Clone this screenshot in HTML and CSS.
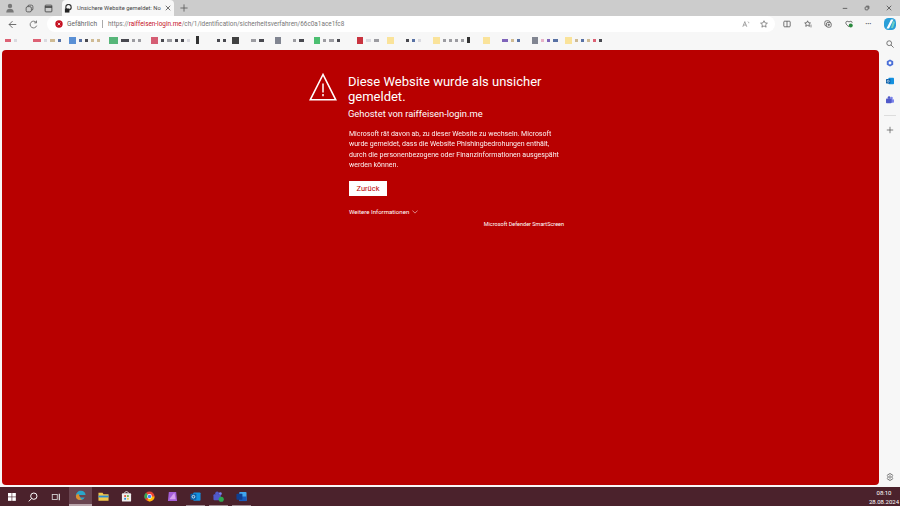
FILE: index.html
```html
<!DOCTYPE html>
<html lang="de">
<head>
    <meta charset="UTF-8">
    <title>Unsichere Website gemeldet</title>
    <link rel="stylesheet" href="styles.css">
</head>
<body>
    <div class="tabstrip">
        <svg class="strip-icon profile" viewBox="0 0 12 12"><circle cx="6" cy="3.5" r="2.6" fill="#777"/><path d="M1.5 11.5c0-3.5 2-4.6 4.5-4.6s4.500 1.100 4.500 4.600z" fill="#777"/></svg>
        <svg class="strip-icon" viewBox="0 0 12 12" fill="none" stroke="#444"><rect x="3.5" y="1.5" width="7" height="7" rx="2"/><rect x="1.5" y="3.5" width="7" height="7" rx="2" fill="#ccc"/></svg>
        <svg class="strip-icon" viewBox="0 0 12 12" fill="none" stroke="#333"><rect x="1.5" y="1.5" width="9" height="9" rx="1"/><path d="M1.5 4h9" stroke-width="2"/></svg>
        <div class="tab">
            <svg class="tab-icon" viewBox="0 0 10 10"><circle cx="5" cy="3.5" r="3" fill="none" stroke="#333" stroke-width="1.3"/><rect x="1" y="5" width="5" height="4.5" fill="#222"/></svg>
            <span class="tab-title">Unsichere Website gemeldet: No</span>
            <svg class="tab-close" viewBox="0 0 8 8" stroke="#444"><path d="M1 1l6 6M7 1l-6 6"/></svg>
        </div>
        <svg class="new-tab" viewBox="0 0 10 10" stroke="#555"><path d="M5 .5v9M.5 5h9"/></svg>
        <div class="window-buttons">
            <svg viewBox="0 0 8 8" stroke="#444"><path d="M1 4.5h6"/></svg>
            <svg viewBox="0 0 8 8" fill="none" stroke="#444"><rect x="1.5" y="2.5" width="4" height="4" rx="1"/><path d="M3 1.5h3.5V5"/></svg>
            <svg viewBox="0 0 8 8" stroke="#444"><path d="M1 1l6 6M7 1l-6 6"/></svg>
        </div>
    </div>

    <div class="toolbar">
        <svg class="nav-icon" viewBox="0 0 12 12" fill="none" stroke="#444"><path d="M11 6H1.500M6 1.500L1.500 6 6 10.500"/></svg>
        <svg class="nav-icon" viewBox="0 0 12 12" fill="none" stroke="#555"><path d="M10.300 7.500A4.500 4.500 0 1 1 9.600 3.300M10 .8v3H7"/></svg>
        <div class="address">
            <svg class="danger" viewBox="0 0 8 8"><circle cx="4" cy="4" r="3.7" fill="#c50f1f"/><path d="M2.7 2.7l2.6 2.6M5.300 2.700L2.700 5.300" stroke="#fff" stroke-width=".8"/></svg>
            <span class="danger-label">Gefährlich</span>
            <span class="address-sep"></span>
            <span class="url"><span class="url-base">https://</span><span class="url-host">raiffeisen-login.me</span><span class="url-base">/ch/1/identification/sicherheitsverfahren/66c0a1ace1fc8</span></span>
            <svg class="addr-icon readaloud" viewBox="0 0 10 10" fill="none" stroke="#777" stroke-width=".8"><path d="M1 8.500L3.500 2 6 8.500M1.900 6.300h3.200M7.500 2c.8.500 1 1.300.9 2"/></svg>
            <svg class="addr-icon" viewBox="0 0 10 10" fill="none" stroke="#555" stroke-width=".8"><path d="M5 .9l1.250 2.750 3 .3-2.250 2 .65 3L5 7.400 2.350 8.950l.65-3-2.250-2 3-.3z"/></svg>
        </div>
        <div class="tools">
            <svg viewBox="0 0 10 10" fill="none" stroke="#444" stroke-width=".9"><rect x="1" y="1.500" width="8" height="7" rx="1"/><path d="M5 1.500v7"/></svg>
            <svg viewBox="0 0 10 10" fill="none" stroke="#444" stroke-width=".9"><path d="M4.500 1l1.100 2.400 2.500.3-1.800 1.700.5 2.500-2.300-1.200-2.300 1.200.5-2.500L.9 3.700l2.500-.3zM8 6.500h1.500M8 8.500h1.500"/></svg>
            <svg viewBox="0 0 10 10" fill="none" stroke="#444" stroke-width=".9"><rect x="1" y="1" width="6.500" height="6.500" rx="2"/><rect x="3" y="3" width="6" height="6" rx="2" fill="#f7f7f7"/><path d="M6 4.500v3M4.500 6h3"/></svg>
            <svg viewBox="0 0 10 10"><path d="M5 2.500C3.500.8 1 1.500 1 3.500 1 5.300 3 7 5 8.500M5 2.500c1.500-1.700 4-1 4 1" fill="none" stroke="#444" stroke-width=".9"/><circle cx="7.200" cy="7" r="2.500" fill="#2b8a3e"/></svg>
            <span class="more">···</span>
            <svg class="copilot" viewBox="0 0 12 12"><rect width="12" height="12" rx="4.500" fill="#2a9fd8"/><path d="M7 1.500h2.500L5 10.500H2.500z" fill="#fff"/><path d="M9 3l2 1-2 6H7z" fill="#6fd0c4"/></svg>
        </div>
    </div>

    <div class="favorites">
        <div class="fav-group" style="width:28px"><span class="mark w6 c-red"></span><span class="mark w3 c-pale"></span></div>
        <div class="fav-group" style="width:36px"><span class="mark w8 c-red"></span><span class="mark w3 c-pale"></span><span class="mark w5 c-tan"></span><span class="mark w3 c-navy"></span></div>
        <div class="fav-group" style="width:40px"><span class="fav c-blue"></span><span class="mark w3 c-navy"></span><span class="mark w3 c-dark"></span><span class="mark w3 c-tan"></span><span class="mark w3 c-tan"></span></div>
        <div class="fav-group" style="width:42px"><span class="fav wide c-green"></span><span class="mark w8 c-dark"></span><span class="mark w3 c-grey"></span><span class="mark w3 c-grey"></span></div>
        <div class="fav-group" style="width:45px"><span class="fav c-rose"></span><span class="mark w3 c-dark"></span><span class="mark w5 c-grey"></span><span class="mark w3 c-dark"></span><span class="mark w3 c-dark"></span><span class="mark w3 c-pale"></span></div>
        <div class="fav-group" style="width:21px"><span class="fav-bar"></span></div>
        <div class="fav-group" style="width:15px"><span class="mark w3 c-dark"></span><span class="mark w3 c-dark"></span></div>
        <div class="fav-group" style="width:43px"><span class="fav c-black"></span><span class="spacer"></span><span class="mark w5 c-grey"></span><span class="mark w5 c-dark"></span></div>
        <div class="fav-group" style="width:39px"><span class="fav small c-steel"></span><span class="spacer"></span><span class="mark w3 c-grey"></span><span class="mark w5 c-dark"></span></div>
        <div class="fav-group" style="width:43px"><span class="fav small c-lime"></span><span class="mark w3 c-grey"></span><span class="mark w5 c-grey"></span><span class="mark w3 c-dark"></span></div>
        <div class="fav-group" style="width:30px"><span class="fav small c-crimson"></span><span class="mark w5 c-pale"></span><span class="mark w5 c-grey"></span></div>
        <div class="fav-group" style="width:46px"><span class="fav c-folder"></span><span class="spacer"></span><span class="mark w3 c-dark"></span><span class="mark w3 c-navy"></span><span class="mark w3 c-pale"></span></div>
        <div class="fav-group" style="width:50px"><span class="fav c-folder"></span><span class="mark w3 c-grey"></span><span class="mark w3 c-grey"></span><span class="mark w3 c-grey"></span><span class="mark w3 c-grey"></span><span class="mark-tall"></span></div>
        <div class="fav-group" style="width:49px"><span class="fav c-folder"></span><span class="spacer"></span><span class="mark w6 c-purple"></span><span class="mark w3 c-tan"></span><span class="mark w3 c-navy"></span></div>
        <div class="fav-group" style="width:33px"><span class="fav small c-steel"></span><span class="mark w3 c-pink"></span><span class="mark w3 c-purple"></span><span class="mark w5 c-navy"></span></div>
        <div class="fav-group"><span class="fav c-folder"></span><span class="mark w3 c-tan"></span><span class="mark w3 c-navy"></span><span class="mark w3 c-tan"></span><span class="mark w3 c-red"></span><span class="mark w3 c-dark"></span></div>
    </div>

    <div class="middle">
        <main class="warning">
            <div class="warning-box">
                <svg class="warning-sign" viewBox="0 0 28 28" fill="none" stroke="#fff"><path d="M14 1.500L1.200 26.800h25.600z" stroke-width="1.600"/><path d="M14 10.500v9M14 21v2.200" stroke-width="1.500"/></svg>
                <div class="warning-text">
                    <h1>Diese Website wurde als unsicher gemeldet.</h1>
                    <p class="hosted">Gehostet von raiffeisen-login.me</p>
                    <p class="details">Microsoft rät davon ab, zu dieser Website zu wechseln. Microsoft wurde gemeldet, dass die Website Phishingbedrohungen enthält, durch die personenbezogene oder Finanzinformationen ausgespäht werden können.</p>
                    <button class="back">Zurück</button>
                    <div class="more-info">Weitere Informationen <svg viewBox="0 0 8 5" fill="none" stroke="#fff" stroke-width=".7"><path d="M.5.500L4 4 7.500.500"/></svg></div>
                    <div class="smartscreen">Microsoft Defender SmartScreen</div>
                </div>
            </div>
        </main>
        <aside class="sidebar">
            <svg viewBox="0 0 10 10" fill="none" stroke="#666" stroke-width="1.100"><circle cx="4" cy="4" r="3"/><path d="M6.200 6.200L9.500 9.500"/></svg>
            <svg viewBox="0 0 10 10"><path d="M5 .5l4 2.300v4.400L5 9.500 1 7.200V2.800z" fill="#4a6fd8"/><circle cx="5" cy="5" r="1.800" fill="#f7f7f7"/></svg>
            <svg viewBox="0 0 10 10"><rect x="3" y="1" width="7" height="8" rx="1" fill="#1490df"/><rect y="2.500" width="5.500" height="5.500" rx=".7" fill="#0a5ea8"/><circle cx="2.750" cy="5.250" r="1.300" fill="none" stroke="#fff" stroke-width=".7"/></svg>
            <svg viewBox="0 0 10 10"><circle cx="7" cy="2.500" r="1.500" fill="#7b83eb"/><rect x="5.500" y="4" width="4.500" height="4.500" rx="1" fill="#7b83eb"/><circle cx="3.800" cy="2" r="1.700" fill="#5059c9"/><rect y="3" width="7" height="6" rx="1" fill="#5059c9"/></svg>
            <span class="side-sep"></span>
            <svg viewBox="0 0 10 10" stroke="#555" stroke-width=".9"><path d="M5 1v8M1 5h8"/></svg>
            <svg class="side-gear" viewBox="0 0 10 10" fill="none" stroke="#555" stroke-width=".8"><circle cx="5" cy="5" r="1.500"/><path d="M4 .8h2l.3 1.300 1.200-.5 1.100 1.700-1 .9v1.600l1 .9-1.100 1.700-1.200-.5L6 9.200H4l-.3-1.300-1.200.5L1.400 6.700l1-.9V4.200l-1-.9 1.100-1.700 1.200.5z"/></svg>
        </aside>
    </div>

    <footer class="taskbar">
        <svg class="start" viewBox="0 0 10 10" fill="#fff"><rect width="4.500" height="4.500"/><rect x="5.300" width="4.500" height="4.500"/><rect y="5.300" width="4.500" height="4.500"/><rect x="5.300" y="5.300" width="4.500" height="4.500"/></svg>
        <svg class="task-icon" viewBox="0 0 12 12" fill="none" stroke="#fff" stroke-width="1.200"><circle cx="7" cy="5" r="3.800"/><path d="M4.300 7.800L1 11.200"/></svg>
        <svg class="task-icon task-view" viewBox="0 0 12 12" fill="none" stroke="#ddd"><rect x="1.500" y="3" width="6" height="6"/><path d="M10 2v8" stroke-width="1.500"/></svg>
        <div class="task-app active">
            <svg viewBox="0 0 12 12"><path d="M1 6.500C1 3 3.500.8 6.500.8c3 0 5 2 5 4.700H4.500c0 2.500 3 3.500 6 2.300-1 2.500-3 3.200-4.500 3.200C3 11 1 9.500 1 6.500z" fill="#2ba5c9"/><path d="M1 7c0-1.800 1.700-2.600 3-2.600.5 3 2 5 3.500 6.300C3.500 11.500 1 9.500 1 7z" fill="#e08e2b"/></svg>
        </div>
        <div class="task-app">
            <svg viewBox="0 0 12 12"><path d="M.5 2h4.500l1 1.500h5.500v7H.5z" fill="#f2c94c"/><rect x=".5" y="5" width="11" height="2" fill="#2d8fd5"/></svg>
        </div>
        <div class="task-app">
            <svg viewBox="0 0 12 12"><rect x="1" y="2.500" width="10" height="9" rx="1" fill="#eee"/><path d="M4 2.500c0-2.500 4-2.500 4 0" fill="none" stroke="#eee"/><rect x="3.500" y="4.500" width="2" height="2" fill="#e2533c"/><rect x="6.500" y="4.500" width="2" height="2" fill="#6ab04c"/><rect x="3.500" y="7.500" width="2" height="2" fill="#2d8fd5"/><rect x="6.500" y="7.500" width="2" height="2" fill="#f2c94c"/></svg>
        </div>
        <div class="task-app">
            <svg viewBox="0 0 12 12"><circle cx="6" cy="6" r="5.500" fill="#ea4335"/><path d="M6 6L1.200 8.800A5.500 5.500 0 0 1 2.200 2z" fill="#34a853"/><path d="M6 11.500A5.500 5.500 0 0 0 11.500 6H6L3.500 10z" fill="#fbbc05"/><circle cx="6" cy="6" r="2.600" fill="#fff"/><circle cx="6" cy="6" r="1.900" fill="#4285f4"/></svg>
        </div>
        <div class="task-app">
            <svg viewBox="0 0 12 12"><path d="M2 1h8l1 10H1z" fill="#a55fd8"/><path d="M2.500 9L8 2l1.500 7z" fill="#d8a0ee"/></svg>
        </div>
        <div class="task-app underlined">
            <svg viewBox="0 0 12 12"><rect x="3.500" y="1.500" width="8" height="9" rx="1" fill="#1490df"/><rect x=".5" y="3" width="6.500" height="6.500" rx=".8" fill="#0a5ea8"/><circle cx="3.750" cy="6.250" r="1.500" fill="none" stroke="#fff" stroke-width=".8"/></svg>
        </div>
        <div class="task-app underlined">
            <svg viewBox="0 0 12 12"><circle cx="8" cy="3" r="1.600" fill="#7b83eb"/><circle cx="4.500" cy="2.500" r="2" fill="#5059c9"/><rect x=".5" y="3.500" width="8" height="6.500" rx="1" fill="#5059c9"/><circle cx="9" cy="9" r="2.800" fill="#2fa84f"/></svg>
        </div>
        <div class="task-app underlined">
            <svg viewBox="0 0 12 12"><rect x="3.500" y="1" width="8" height="10" rx="1" fill="#41a5ee"/><rect x="3.500" y="6" width="8" height="5" fill="#185abd"/><rect x=".5" y="3" width="6.500" height="6.500" rx=".8" fill="#103f91"/></svg>
        </div>
        <div class="clock"><span>08:10</span><span>28.08.2024</span></div>
    </footer>
</body>
</html>
```

FILE: styles.css
```css
body { margin: 0; height: 506px; overflow: hidden; display: flex; flex-direction: column; font-family: Roboto, "Noto Sans", sans-serif; background-color: #f7f7f7; color: #333; }
svg { display: block; flex-shrink: 0; }

/* tab strip */
.tabstrip { height: 16px; display: flex; align-items: center; background-color: #cccccc; padding-left: 5px; }
.strip-icon { width: 9px; height: 9px; margin-right: 10px; }
.strip-icon.profile { width: 10px; height: 10px; }
.tab { height: 16px; width: 112px; margin-left: -1px; box-sizing: border-box; padding: 0 4px 0 2px; display: flex; align-items: center; gap: 4px; background-color: #f7f7f7; border-radius: 4px 4px 0 0; }
.tab-icon { width: 9px; height: 9px; }
.tab-title { flex: 1; font-size: 5.800px; white-space: nowrap; color: #444; }
.tab-close { width: 6px; height: 6px; }
.new-tab { width: 8px; height: 8px; margin-left: 6px; }
.window-buttons { margin-left: auto; display: flex; gap: 16px; padding-right: 8px; }
.window-buttons svg { width: 6px; height: 6px; }

/* address bar */
.toolbar { height: 16px; display: flex; align-items: center; background-color: #f7f7f7; padding-left: 8px; }
.nav-icon { width: 9px; height: 9px; margin-right: 12px; }
.address { width: 728px; height: 16px; margin-left: -3px; box-sizing: border-box; padding: 0 7px 0 8px; background-color: #fff; border-radius: 8px; display: flex; align-items: center; }
.danger { width: 8px; height: 8px; margin-right: 4px; }
.danger-label { font-size: 6.600px; color: #666; }
.address-sep { width: 1px; height: 8px; background-color: #aaa; margin: 0 5px; }
.url { flex: 1; font-size: 6.400px; white-space: nowrap; color: #777; }
.url-host { color: #c50f1f; }
.addr-icon { width: 8px; height: 8px; }
.readaloud { margin-right: 10px; }
.tools { flex: 1; display: flex; align-items: center; justify-content: space-between; padding: 0 4px 0 8px; }
.tools svg { width: 8px; height: 8px; }
.tools .copilot { width: 12px; height: 12px; }
.more { font-size: 7px; color: #444; font-weight: 700; line-height: 8px; }

/* favourites, the names are blurred out in the shot */
.favorites { height: 16px; display: flex; align-items: center; padding-left: 5px; background-color: #f7f7f7; }
.fav-group { flex-shrink: 0; display: flex; align-items: center; gap: 3px; filter: blur(.4px); opacity: .85; }
.mark { height: 3px; }
.w3 { width: 3px; }
.w5 { width: 5px; }
.w6 { width: 6px; }
.w8 { width: 8px; }
.mark-tall { width: 3px; height: 6px; background-color: #111; }
.fav { width: 7px; height: 7px; }
.fav.wide { width: 9px; }
.fav.small { width: 6px; }
.fav-bar { width: 3px; height: 8px; background-color: #111; }
.spacer { width: 6px; }
.c-red { background-color: #d9475e; }
.c-pale { background-color: #d5d5dd; }
.c-dark { background-color: #2b2b33; }
.c-tan { background-color: #c9b183; }
.c-blue { background-color: #3f7fd0; }
.c-navy { background-color: #3d5a96; }
.c-green { background-color: #3cab64; }
.c-grey { background-color: #8d8d93; }
.c-rose { background-color: #d0435c; }
.c-black { background-color: #222; }
.c-steel { background-color: #6d7280; }
.c-lime { background-color: #2fb65a; }
.c-crimson { background-color: #c1121f; }
.c-folder { background-color: #fbe08a; }
.c-purple { background-color: #6b4bb0; }
.c-pink { background-color: #e6a6c0; }

/* middle */
.middle { flex: 1; display: flex; min-height: 0; padding: 2px 0; }
.warning { flex: 1; margin-left: 2px; background-color: #b80000; border-radius: 4px; }
.warning-box { display: flex; margin: 24px 0 0 307px; color: #fff; }
.warning-sign { width: 28px; height: 28px; margin: -1px 11px 0 0; }
.warning-text { width: 216px; }
h1 { margin: 0; font-size: 13px; font-weight: 400; line-height: 15px; }
.hosted { margin: 4px 0 0; font-size: 9.350px; line-height: 12px; }
.details { margin: 9px 0 0 1px; font-size: 7px; line-height: 10.400px; opacity: .95; }
.back { display: block; margin: 10px 0 0 1px; width: 38px; height: 15px; padding: 0; border: 0; background-color: #fff; color: #b80000; font-family: inherit; font-size: 7.500px; }
.more-info { display: flex; align-items: center; gap: 3px; margin: 12px 0 0 1px; font-size: 6.100px; line-height: 8px; }
.more-info svg { width: 6px; height: 4px; }
.smartscreen { margin-top: 4px; font-size: 5.500px; line-height: 8px; text-align: right; }

.sidebar { width: 21px; display: flex; flex-direction: column; align-items: center; gap: 10.700px; margin-top: -10px; }
.sidebar svg { width: 8px; height: 8px; }
.side-sep { width: 12px; height: 1px; background-color: #ddd; }
.sidebar .side-gear { margin-top: auto; margin-bottom: 4px; }

/* taskbar */
.taskbar { height: 19px; display: flex; align-items: center; background-color: #4b222c; padding-left: 8px; }
.start { width: 8px; height: 8px; margin-right: 12px; }
.task-icon { width: 10px; height: 10px; margin-right: 13px; }
.task-view { margin-right: 8px; }
.task-app { width: 23px; height: 19px; display: flex; align-items: center; justify-content: center; box-sizing: border-box; }
.task-app svg { width: 11px; height: 11px; }
.active { background-color: #6a4550; border-bottom: 2px solid #b9a5ab; }
.underlined { width: 19px; margin: 0 2px; border-bottom: 1px solid #a08c92; }
.clock { margin-left: auto; width: 32px; display: flex; flex-direction: column; align-items: center; font-size: 6px; line-height: 9px; color: #fff; }
```
